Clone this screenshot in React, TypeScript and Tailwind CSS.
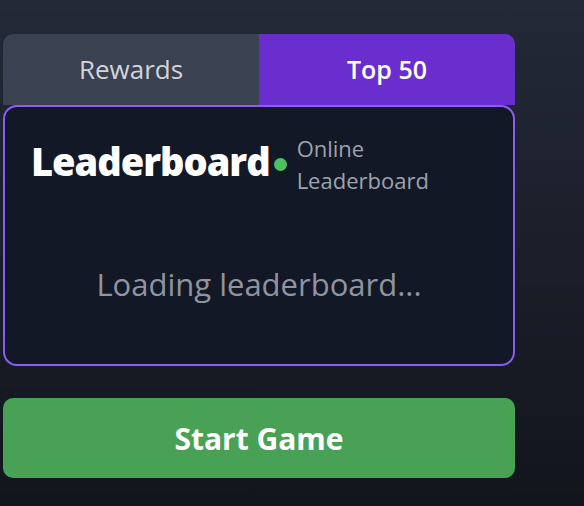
import React from "react";

const font = { fontFamily: "'Open Sans', 'Noto Sans', sans-serif" };

export default function App() {
  return (
    <div
      className="w-full min-h-[506px] bg-gradient-to-b from-[#232937] to-[#12151c] pl-[3px] pt-[34px]"
      style={font}
    >
      <div className="w-[512px] flex flex-col">
        <div className="flex h-[71px]">
          <button className="flex-1 bg-[#3a4150] text-[#d1d5db] text-[26px] font-medium rounded-tl-[10px]">
            Rewards
          </button>
          <button className="flex-1 bg-[#6a2ecf] text-white text-[25px] font-semibold rounded-tr-[10px]">
            Top 50
          </button>
        </div>
        <div className="h-[261px] bg-[#131826] border-2 border-[#8b5cf6] rounded-[14px] flex flex-col">
          <div className="flex items-start pl-[26px] pt-[30px]">
            <h2 className="text-[38px] leading-[48px] font-extrabold text-white tracking-[-1px]">
              Leaderboard
            </h2>
            <span className="mt-[21px] ml-[4px] w-[13px] h-[13px] rounded-full bg-[#4ec063]" />
            <div className="ml-[10px] -mt-[5px] text-[22px] leading-[32px] text-[#9ca3af]">
              <div>Online</div>
              <div>Leaderboard</div>
            </div>
          </div>
          <div className="flex-1 flex items-center justify-center pt-[8px]">
            <p className="text-[31px] text-[#8f94a0]">Loading leaderboard...</p>
          </div>
        </div>
        <button className="mt-[32px] h-[80px] bg-[#48a155] rounded-[10px] text-white text-[30px] font-bold">
          Start Game
        </button>
      </div>
    </div>
  );
}
